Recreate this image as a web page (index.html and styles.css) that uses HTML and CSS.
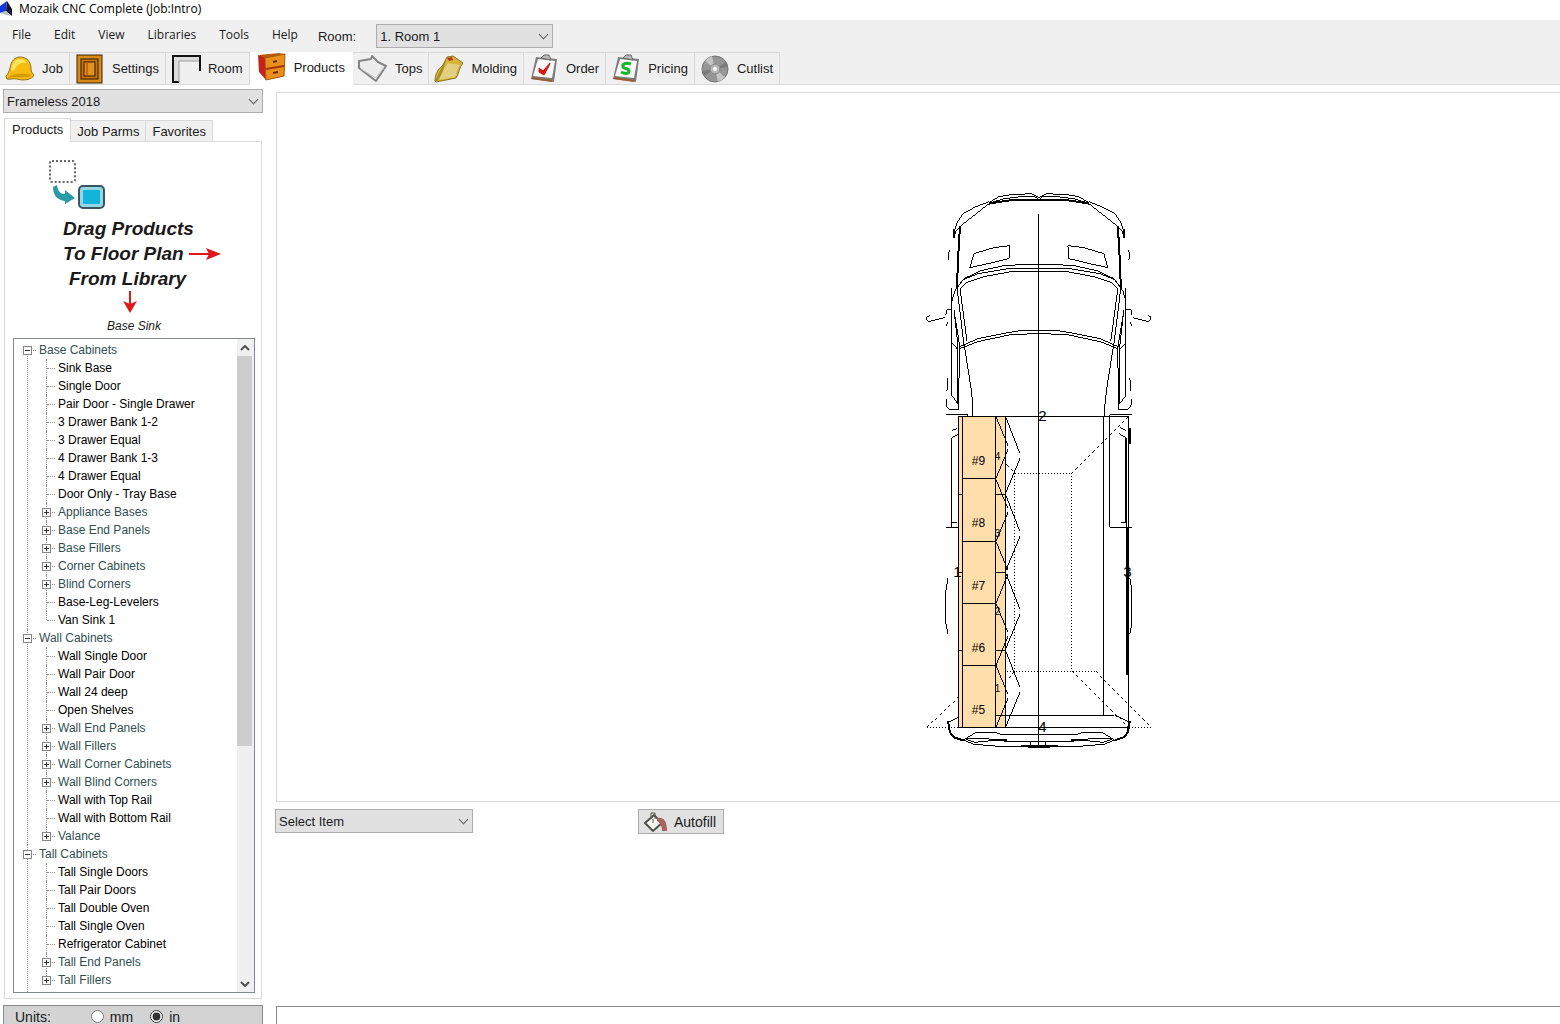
FILE: index.html
```html
<!DOCTYPE html>
<html lang="en">
<head>
    <meta charset="UTF-8">
    <meta name="viewport" content="width=device-width, initial-scale=1.0">
    <title>Mozaik CNC Complete (Job:Intro)</title>
    <link rel="stylesheet" href="styles.css">
</head>
<body>
    <header class="title-bar">
        <svg class="app-icon" width="14" height="16" viewBox="0 0 14 16">
            <path d="M0 5L7 0L6 10L0 12Z" fill="#1238e0"/>
            <path d="M7 0L12 8V15L6 10Z" fill="#10182c"/>
            <path d="M0 12L6 10L11 15L3 13Z" fill="#b4bccb"/>
        </svg>
        <span>Mozaik CNC Complete (Job:Intro)</span>
    </header>

    <nav class="menu-bar">
        <div class="menu-items">
            <button>File</button>
            <button>Edit</button>
            <button>View</button>
            <button>Libraries</button>
            <button>Tools</button>
            <button>Help</button>
        </div>
        <label for="room">Room:</label>
        <span class="select room-select">
            <select id="room"><option>1. Room 1</option></select>
        </span>
    </nav>

    <nav class="main-tabs">
        <button>
            <svg width="30" height="30" viewBox="0 0 30 30">
                <path d="M1 22C3 20 4 18 5 14C6 7 10 3 15 3C22 3 26 8 26 15C26 18 28 20 29 21C27 26 18 27 12 25C8 24 5 26 2 25Z" fill="#f6bd10" stroke="#8c7420"/>
                <path d="M6 16C7 9 10 5 15 5C19 5 21 7 22 9C16 7 11 11 9 17Z" fill="#ffe35c"/>
                <path d="M3 23C8 19 20 19 27 21C22 25 9 22 3 24Z" fill="#d89b08"/>
            </svg>
            Job
        </button>
        <button>
            <svg width="30" height="30" viewBox="0 0 30 30">
                <rect x="2" y="1" width="25" height="28" fill="#d98a16" stroke="#3a2208"/>
                <rect x="6" y="5" width="17" height="20" fill="#c47608" stroke="#2c1804"/>
                <rect x="9" y="8" width="11" height="14" fill="#e09420" stroke="#2c1804"/>
                <path d="M12 8V22" stroke="#c0300c"/>
            </svg>
            Settings
        </button>
        <button>
            <svg width="30" height="30" viewBox="0 0 30 30">
                <path d="M2 1H29V7H8V28H2Z" fill="#dcdcdc"/>
                <path d="M8 28H2V2H29V17" fill="none" stroke="#111" stroke-width="2"/>
                <path d="M8 28V7H28" fill="none" stroke="#999"/>
            </svg>
            Room
        </button>
        <button class="active">
            <svg width="30" height="30" viewBox="0 0 30 30">
                <path d="M1 3L8 5L9 28L2 20Z" fill="#c8201c"/>
                <path d="M1 3L22 1L28 2L8 6Z" fill="#b85a10"/>
                <path d="M8 6L28 2L27 24L9 28Z" fill="#e88f1c" stroke="#a85408"/>
                <path d="M9 17L27 14" stroke="#a03808" stroke-width="2"/>
                <path d="M16 10L20 9M16 21L21 20" stroke="#6b2c04" stroke-width="2"/>
            </svg>
            Products
        </button>
        <button>
            <svg width="30" height="30" viewBox="0 0 30 30">
                <path d="M1 7L13 5L14 2L20 8L28 12L18 27L1 14Z" fill="#ececec" stroke="#858585" stroke-width="2" stroke-linejoin="round"/>
                <path d="M3 15L18 24L26 13" fill="none" stroke="#c9c9c9"/>
            </svg>
            Tops
        </button>
        <button>
            <svg width="30" height="30" viewBox="0 0 30 30">
                <path d="M1 27C1 20 4 15 9 11L13 3L19 2L29 9C25 13 25 20 22 24L2 28Z" fill="#d4b53a" stroke="#8a7420"/>
                <path d="M4 26C5 18 9 16 14 9L26 11C22 15 23 20 21 23Z" fill="#e3cd80"/>
                <path d="M1 27L13 3L9 17L4 27Z" fill="#a88c1c"/>
                <path d="M13 4L18 3L19 6L15 7Z" fill="#c03418"/>
            </svg>
            Molding
        </button>
        <button>
            <svg width="30" height="30" viewBox="0 0 30 30">
                <path d="M7 3L28 5L25 28L2 25Z" fill="#7d7d7d"/>
                <path d="M9 5L26 7L23 24L4 22Z" fill="#fafafa"/>
                <path d="M3 23L24 26L23 28L2 25Z" fill="#9a5c34"/>
                <path d="M12 4L15 1H20L22 6Z" fill="#b8b8b8" stroke="#6a6a6a"/>
                <path d="M10 14L14 17L21 9L20 12L15 21L10 18Z" fill="#d81414" stroke="#d81414"/>
            </svg>
            Order
        </button>
        <button>
            <svg width="30" height="30" viewBox="0 0 30 30">
                <path d="M7 3L28 5L25 28L2 25Z" fill="#7d7d7d"/>
                <path d="M9 5L26 7L23 24L4 22Z" fill="#fafafa"/>
                <path d="M3 23L24 26L23 28L2 25Z" fill="#9a5c34"/>
                <path d="M12 4L15 1H20L22 6Z" fill="#b8b8b8" stroke="#6a6a6a"/>
                <path d="M20 10C15 8 11 10 12 13C13 15 18 14 18 17C18 20 14 20 10 18" fill="none" stroke="#18b428" stroke-width="3"/>
            </svg>
            Pricing
        </button>
        <button>
            <svg width="30" height="30" viewBox="0 0 30 30">
                <circle cx="15" cy="15" r="13" fill="#969696" stroke="#747474"/>
                <path d="M15 15L5 7A13 13 0 0 1 12 2ZM15 15L25 23A13 13 0 0 1 18 28Z" fill="#c4c4c4"/>
                <path d="M15 15L26 8A13 13 0 0 1 28 13ZM15 15L4 22A13 13 0 0 1 2 17Z" fill="#7a7a7a"/>
                <circle cx="15" cy="15" r="5" fill="#b8b8b8" stroke="#888"/>
                <circle cx="15" cy="15" r="2" fill="#fff"/>
            </svg>
            Cutlist
        </button>
    </nav>

    <div class="workspace">
        <aside class="sidebar">
            <span class="select">
                <select aria-label="Library"><option>Frameless 2018</option></select>
            </span>

            <div class="side-tabs">
                <button class="active">Products</button>
                <button>Job Parms</button>
                <button>Favorites</button>
            </div>

            <section class="side-panel">
                <div class="drag-hint">
                    <svg class="drag-icon" width="58" height="52" viewBox="0 0 58 52">
                        <rect x="3" y="3" width="25" height="21" rx="2" fill="none" stroke="#666" stroke-width="2" stroke-dasharray="2 2"/>
                        <path d="M6 29L10 27C11 33 13 36 18 36V32L28 40L18 46V43C10 42 6 37 6 29Z" fill="#2a9aa8"/>
                        <rect x="32" y="28" width="25" height="22" rx="4" fill="#8fd8e4" stroke="#3c5560" stroke-width="2"/>
                        <rect x="36" y="32" width="17" height="14" rx="1" fill="#12b4dc"/>
                    </svg>
                    <p>Drag Products</p>
                    <p>To Floor Plan<svg width="34" height="14" viewBox="0 0 34 14"><path d="M1 7H24" stroke="#e01818" stroke-width="2"/><path d="M18 1L33 7L18 13L21 7Z" fill="#e01818"/></svg></p>
                    <p>From Library</p>
                    <svg class="arrow-down" width="14" height="22" viewBox="0 0 14 22"><path d="M7 0V14" stroke="#e01818" stroke-width="2"/><path d="M0 10L7 13L14 10L7 22Z" fill="#e01818"/></svg>
                </div>
                <div class="current-product">Base Sink</div>

                <div class="tree-box">
                    <ul class="tree">
                        <li>
                            <div class="row group"><button class="toggle" aria-label="Collapse"></button>Base Cabinets</div>
                            <ul>
                                <li><div class="row">Sink Base</div></li>
                                <li><div class="row">Single Door</div></li>
                                <li><div class="row">Pair Door - Single Drawer</div></li>
                                <li><div class="row">3 Drawer Bank 1-2</div></li>
                                <li><div class="row">3 Drawer Equal</div></li>
                                <li><div class="row">4 Drawer Bank 1-3</div></li>
                                <li><div class="row">4 Drawer Equal</div></li>
                                <li><div class="row">Door Only - Tray Base</div></li>
                                <li><div class="row group"><button class="toggle closed" aria-label="Expand"></button>Appliance Bases</div></li>
                                <li><div class="row group"><button class="toggle closed" aria-label="Expand"></button>Base End Panels</div></li>
                                <li><div class="row group"><button class="toggle closed" aria-label="Expand"></button>Base Fillers</div></li>
                                <li><div class="row group"><button class="toggle closed" aria-label="Expand"></button>Corner Cabinets</div></li>
                                <li><div class="row group"><button class="toggle closed" aria-label="Expand"></button>Blind Corners</div></li>
                                <li><div class="row">Base-Leg-Levelers</div></li>
                                <li><div class="row">Van Sink 1</div></li>
                            </ul>
                        </li>
                        <li>
                            <div class="row group"><button class="toggle" aria-label="Collapse"></button>Wall Cabinets</div>
                            <ul>
                                <li><div class="row">Wall Single Door</div></li>
                                <li><div class="row">Wall Pair Door</div></li>
                                <li><div class="row">Wall 24 deep</div></li>
                                <li><div class="row">Open Shelves</div></li>
                                <li><div class="row group"><button class="toggle closed" aria-label="Expand"></button>Wall End Panels</div></li>
                                <li><div class="row group"><button class="toggle closed" aria-label="Expand"></button>Wall Fillers</div></li>
                                <li><div class="row group"><button class="toggle closed" aria-label="Expand"></button>Wall Corner Cabinets</div></li>
                                <li><div class="row group"><button class="toggle closed" aria-label="Expand"></button>Wall Blind Corners</div></li>
                                <li><div class="row">Wall with Top Rail</div></li>
                                <li><div class="row">Wall with Bottom Rail</div></li>
                                <li><div class="row group"><button class="toggle closed" aria-label="Expand"></button>Valance</div></li>
                            </ul>
                        </li>
                        <li class="continues">
                            <div class="row group"><button class="toggle" aria-label="Collapse"></button>Tall Cabinets</div>
                            <ul>
                                <li><div class="row">Tall Single Doors</div></li>
                                <li><div class="row">Tall Pair Doors</div></li>
                                <li><div class="row">Tall Double Oven</div></li>
                                <li><div class="row">Tall Single Oven</div></li>
                                <li><div class="row">Refrigerator Cabinet</div></li>
                                <li><div class="row group"><button class="toggle closed" aria-label="Expand"></button>Tall End Panels</div></li>
                                <li><div class="row group"><button class="toggle closed" aria-label="Expand"></button>Tall Fillers</div></li>
                            </ul>
                        </li>
                    </ul>
                    <div class="scrollbar">
                        <button aria-label="Scroll up"><svg width="10" height="6" viewBox="0 0 10 6"><path d="M1 5L5 1L9 5" fill="none" stroke="#505050" stroke-width="2"/></svg></button>
                        <div class="track"><div class="thumb"></div></div>
                        <button aria-label="Scroll down"><svg width="10" height="6" viewBox="0 0 10 6"><path d="M1 1L5 5L9 1" fill="none" stroke="#505050" stroke-width="2"/></svg></button>
                    </div>
                </div>
            </section>

            <div class="units">
                <span>Units:</span>
                <label><input type="radio" name="units" value="mm"> mm</label>
                <label><input type="radio" name="units" value="in" checked> in</label>
            </div>
        </aside>

        <main class="plan">
            <div class="canvas">
                <svg viewBox="276 93 1284 708" preserveAspectRatio="xMidYMid meet">
                    <defs>
                        <g id="van-side">
                            <!-- front bumper and fender -->
                            <path d="M988 202L998 196L1010 194L1030 193L1034 195L1038 197"/>
                            <path d="M990 202L1003 198L1020 196L1034 196L1038 199"/>
                            <path d="M988 203L1000 201L1014 199L1029 199H1038" stroke-width="2"/>
                            <path d="M988 201L975 206L962 213L956 222L953 231V236L955 230L960 225L974 214L988 203"/>
                            <path d="M953 228V237" stroke-width="2"/>
                            <path d="M959 225L957 260L956 287" stroke-width="2"/>
                            <path d="M949 249L947 253L948 259"/>
                            <path d="M1009 245L993 247L973 253L969 267L987 263L1008 258Z"/>
                            <!-- windshield -->
                            <path d="M951 300L954 290L963 278L980 270L1003 265L1020 264H1038"/>
                            <path d="M956 287L962 279L977 273L1007 268H1038"/>
                            <path d="M966 340L959 288L965 282L983 276L1010 271H1038"/>
                            <path d="M956 287L963 344M953 310L959 347"/>
                            <path d="M959 346L977 338L1007 332L1020 330H1038"/>
                            <path d="M959 348L977 341L1010 334L1038 333"/>
                            <!-- mirror -->
                            <path d="M944 317L928 321L926 319V316L929 315M951 309H946L945 314M947 321L945 325"/>
                            <!-- door -->
                            <path d="M951 287V395L956 402M951 342L956 348"/>
                            <path d="M953 309L957 345V403"/>
                            <path d="M959 347V365L958 378V403"/>
                            <path d="M963 343L970 387L972 405V416"/>
                            <path d="M947 377L946 390M945 398L946 406L949 409H958V401"/>
                            <!-- wheel -->
                            <path d="M947 578L945 590V623L947 634"/>
                            <!-- rear bumper -->
                            <path d="M962 715L947 722"/>
                            <path d="M947 721L949 732L953 737L962 740" stroke-width="2"/>
                            <path d="M962 740L975 732H993L1000 734H1038"/>
                            <path d="M962 741L965 738H983L1005 741H1038M965 739L974 742L995 740"/>
                            <path d="M963 740L973 744L997 746L1038 747"/>
                            <path d="M992 740H1006" stroke-width="2"/>
                        </g>
                        <path id="base-door" d="M0 0L12 29M12 33L0 62"/>
                        <path id="wall-door" d="M0 0L14 36M14 41L0 75"/>
                    </defs>

                    <g class="outline" transform="translate(.5 .5)">
                        <use href="#van-side"/>
                        <use href="#van-side" transform="translate(2076 0) scale(-1 1)"/>
                        <path d="M1020 746H1057" stroke-width="2"/>
                        <path d="M1030 741V745M1045 741V745"/>

                        <!-- cargo area -->
                        <path d="M945 414H967V416M951 430L956 428M957 434L951 437V527M945 527H962M951 522H956"/>
                        <path d="M1131 414H1109V527H1131M1119 427L1125 430M1118 433L1125 437V522H1120"/>
                        <path d="M1103 416V715M1128 416V727M1126 437V527"/>
                        <path d="M1126 527V675M1129 427V443" stroke-width="2"/>
                        <g stroke-dasharray="1 2">
                            <path d="M1014 473H1071V671M1014 473V671M1006 671H1095M926 727H958M1128 727H1150"/>
                        </g>
                        <g stroke-dasharray="3 3">
                            <path d="M1128 416L1071 473M1006 464L1014 473M1095 671L1150 727M1071 671L1127 727M1014 671L1006 680M958 696L926 727"/>
                        </g>

                        <!-- cabinets -->
                        <rect class="cabinet" x="958" y="416" width="47" height="311"/>
                        <path d="M958 494H962M958 572H962M958 650H962M995 494H1005M995 572H1005M995 650H1005M995 715H1113"/>
                        <path d="M962 416V727M995 416V727M962 478H995M962 541H995M962 603H995M962 665H995"/>
                        <use href="#base-door" x="995" y="416"/>
                        <use href="#base-door" x="995" y="479"/>
                        <use href="#base-door" x="995" y="541"/>
                        <use href="#base-door" x="995" y="603"/>
                        <use href="#base-door" x="995" y="665"/>
                        <use href="#wall-door" x="1005" y="417"/>
                        <use href="#wall-door" x="1005" y="495"/>
                        <use href="#wall-door" x="1005" y="573"/>
                        <use href="#wall-door" x="1005" y="651"/>
                        <path d="M958 416H1128M958 727H1128M1038 213V745"/>
                    </g>

                    <g class="cabinet-labels">
                        <text x="978" y="465">#9</text>
                        <text x="978" y="527">#8</text>
                        <text x="978" y="590">#7</text>
                        <text x="978" y="652">#6</text>
                        <text x="978" y="714">#5</text>
                    </g>
                    <g class="door-labels">
                        <text x="997" y="460">4</text>
                        <text x="997" y="537">3</text>
                        <text x="997" y="615">2</text>
                        <text x="997" y="692">1</text>
                    </g>
                    <g class="wall-labels">
                        <text x="957" y="577">1</text>
                        <text x="1042" y="421">2</text>
                        <text x="1127" y="577">3</text>
                        <text x="1042" y="732">4</text>
                    </g>
                </svg>
            </div>

            <div class="plan-tools">
                <span class="select item-select">
                    <select aria-label="Item"><option>Select Item</option></select>
                </span>
                <button class="autofill">
                    <svg width="26" height="22" viewBox="0 0 26 22">
                        <path d="M2 12L11 4L19 12L10 20Z" fill="#f4f4f0" stroke="#4c5048" stroke-width="2"/>
                        <path d="M8 8V2H12V8M10 8V12" fill="none" stroke="#55584f"/>
                        <path d="M14 7C20 6 24 9 24 20H19C19 15 18 13 14 10Z" fill="#a8645c"/>
                    </svg>
                    Autofill
                </button>
            </div>
            <div class="output"></div>
        </main>
    </div>
</body>
</html>
```

FILE: styles.css
```css
/* General Styles */
* {
    box-sizing: border-box;
}

body {
    margin: 0;
    height: 100vh;
    overflow: hidden;
    display: flex;
    flex-direction: column;
    font-family: "Liberation Sans", Arial, sans-serif;
    font-size: 13px;
    color: #1a1a1a;
    background: #fff;
}

button {
    font: inherit;
    color: inherit;
    margin: 0;
    padding: 0;
    border: none;
    background: none;
}

/* Title and menu */
.title-bar {
    display: flex;
    align-items: center;
    gap: 5px;
    height: 20px;
    font-family: "Open Sans", sans-serif;
    font-size: 12px;
    line-height: 18px;
    padding-bottom: 3px;
    color: #000;
}

.menu-bar {
    display: flex;
    align-items: center;
    gap: 20px;
    height: 32px;
    padding: 0 12px;
    background: #f0f0f0;
}

.menu-items {
    display: flex;
    gap: 23px;
    padding-bottom: 4px;
}

.menu-items button {
    font-family: "Open Sans", sans-serif;
    font-size: 12px;
}

/* Drop-downs */
.select {
    position: relative;
    display: block;
}

.select select {
    appearance: none;
    display: block;
    width: 100%;
    height: 24px;
    padding: 0 20px 0 3px;
    border: 1px solid #adadad;
    border-radius: 0;
    background: #e1e1e1;
    font: inherit;
    color: inherit;
}

.select::after {
    content: "";
    position: absolute;
    right: 6px;
    top: 7px;
    width: 6px;
    height: 6px;
    border: solid #606060;
    border-width: 0 1px 1px 0;
    transform: rotate(45deg);
    pointer-events: none;
}

.room-select {
    width: 177px;
}

/* Main tabs */
.main-tabs {
    display: flex;
    align-items: flex-end;
    height: 33px;
    background: #f0f0f0;
    border-bottom: 1px solid #d9d9d9;
}

.main-tabs button {
    display: flex;
    align-items: center;
    gap: 7px;
    height: 32px;
    padding: 0 6px 0 5px;
    border-top: 1px solid #d9d9d9;
    border-right: 1px solid #d9d9d9;
}

.main-tabs .active {
    height: 33px;
    margin-bottom: -1px;
    padding: 0 7px 4px;
    border-color: #fff;
    background: #fff;
}

/* Sidebar */
.workspace {
    flex: 1;
    min-height: 0;
    display: flex;
    gap: 12px;
}

.sidebar {
    flex: none;
    display: flex;
    flex-direction: column;
    width: 263px;
    padding: 4px 0 0 3px;
}

.side-tabs {
    display: flex;
    align-items: flex-end;
    height: 28px;
    padding-left: 1px;
}

.side-tabs button {
    height: 21px;
    padding: 0 6px;
    border: 1px solid #d9d9d9;
    border-width: 1px 1px 0 0;
    background: #f0f0f0;
}

.side-tabs .active {
    position: relative;
    height: 24px;
    margin-bottom: -1px;
    padding: 0 7px 3px;
    border-left-width: 1px;
    background: #fff;
}

.side-panel {
    flex: 1;
    min-height: 0;
    display: flex;
    flex-direction: column;
    margin: 0 1px 6px;
    padding: 16px 6px 5px 8px;
    border: 1px solid #dcdcdc;
}

.drag-hint {
    display: flex;
    flex-direction: column;
    padding-left: 34px;
    font-size: 19px;
    font-weight: bold;
    font-style: italic;
    line-height: 25px;
}

.drag-hint p {
    display: flex;
    align-items: center;
    gap: 4px;
    margin: 0;
    padding-left: 16px;
}

.drag-hint p:last-of-type {
    padding-left: 22px;
}

.drag-icon {
    margin-bottom: 6px;
}

.arrow-down {
    margin-left: 76px;
}

.current-product {
    padding: 5px 0 4px;
    text-align: center;
    font-size: 12px;
    font-style: italic;
    line-height: 16px;
}

/* Product tree */
.tree-box {
    flex: 1;
    min-height: 0;
    display: flex;
    border: 1px solid #828790;
    overflow: hidden;
}

.tree,
.tree ul {
    list-style: none;
    margin: 0;
    padding: 0;
}

.tree {
    flex: 1;
    display: flex;
    flex-direction: column;
    padding: 2px 0 0 9px;
    font-size: 12px;
    line-height: 18px;
    color: #000;
}

.tree ul {
    padding-left: 19px;
}

.tree li {
    position: relative;
}

.tree .continues {
    flex: 1;
}

.tree li::before {
    content: "";
    position: absolute;
    left: 4px;
    top: 0;
    bottom: 0;
    border-left: 1px dotted #8c8c8c;
}

.tree > li:first-child::before {
    top: 9px;
}

.tree ul li:last-child::before {
    bottom: 9px;
}

.row {
    position: relative;
    display: flex;
    align-items: center;
    height: 18px;
    padding-left: 16px;
    white-space: nowrap;
}

.row::before {
    content: "";
    position: absolute;
    left: 5px;
    top: 9px;
    width: 8px;
    border-top: 1px dotted #8c8c8c;
}

.group {
    padding-left: 0;
    color: #2f4f4f;
}

.toggle {
    position: relative;
    width: 9px;
    height: 9px;
    margin-right: 7px;
    border: 1px solid #868686;
    background: #fff;
}

.toggle::before,
.closed::after {
    content: "";
    position: absolute;
    left: 1px;
    top: 3px;
    width: 5px;
    height: 1px;
    background: #333;
}

.closed::after {
    left: 3px;
    top: 1px;
    width: 1px;
    height: 5px;
}

.scrollbar {
    display: flex;
    flex-direction: column;
    width: 17px;
    padding-right: 2px;
    background: #f0f0f0;
}

.scrollbar button {
    display: flex;
    align-items: center;
    justify-content: center;
    height: 17px;
}

.track {
    flex: 1;
}

.thumb {
    height: 63%;
    background: #cdcdcd;
}

/* Units */
.units {
    display: flex;
    align-items: center;
    height: 19px;
    padding: 3px 11px 0;
    border: 1px solid #8a8a8a;
    border-bottom: none;
    background: #d3d3d3;
    font-size: 14px;
}

.units span {
    margin-right: 40px;
}

.units label {
    display: flex;
    align-items: center;
    gap: 6px;
    margin-right: 17px;
}

.units input {
    width: 13px;
    height: 13px;
    margin: 0;
    accent-color: #333;
}

/* Floor plan */
.plan {
    flex: 1;
    min-width: 0;
    display: flex;
    flex-direction: column;
    padding-top: 7px;
}

.canvas {
    flex: 1;
    min-height: 0;
    margin-left: 1px;
    border: 1px solid #d9d9d9;
    border-right: none;
}

.canvas svg {
    display: block;
    width: 100%;
    height: 100%;
}

.outline {
    fill: none;
    stroke: #000;
    shape-rendering: crispEdges;
}

.cabinet {
    fill: #ffdeac;
}

.cabinet-labels,
.door-labels,
.wall-labels {
    text-anchor: middle;
    font-size: 12px;
}

.door-labels {
    font-size: 10px;
}

.wall-labels {
    font-size: 15px;
}

.plan-tools {
    display: flex;
    gap: 165px;
    height: 204px;
    padding-top: 7px;
}

.item-select {
    width: 198px;
}

.autofill {
    display: flex;
    align-items: center;
    gap: 5px;
    height: 25px;
    padding: 0 7px 0 4px;
    border: 1px solid #adadad;
    background: #e1e1e1;
    font-size: 14px;
}

.output {
    height: 18px;
    margin-left: 1px;
    border: 1px solid #828790;
    border-width: 1px 0 0 1px;
}
```
